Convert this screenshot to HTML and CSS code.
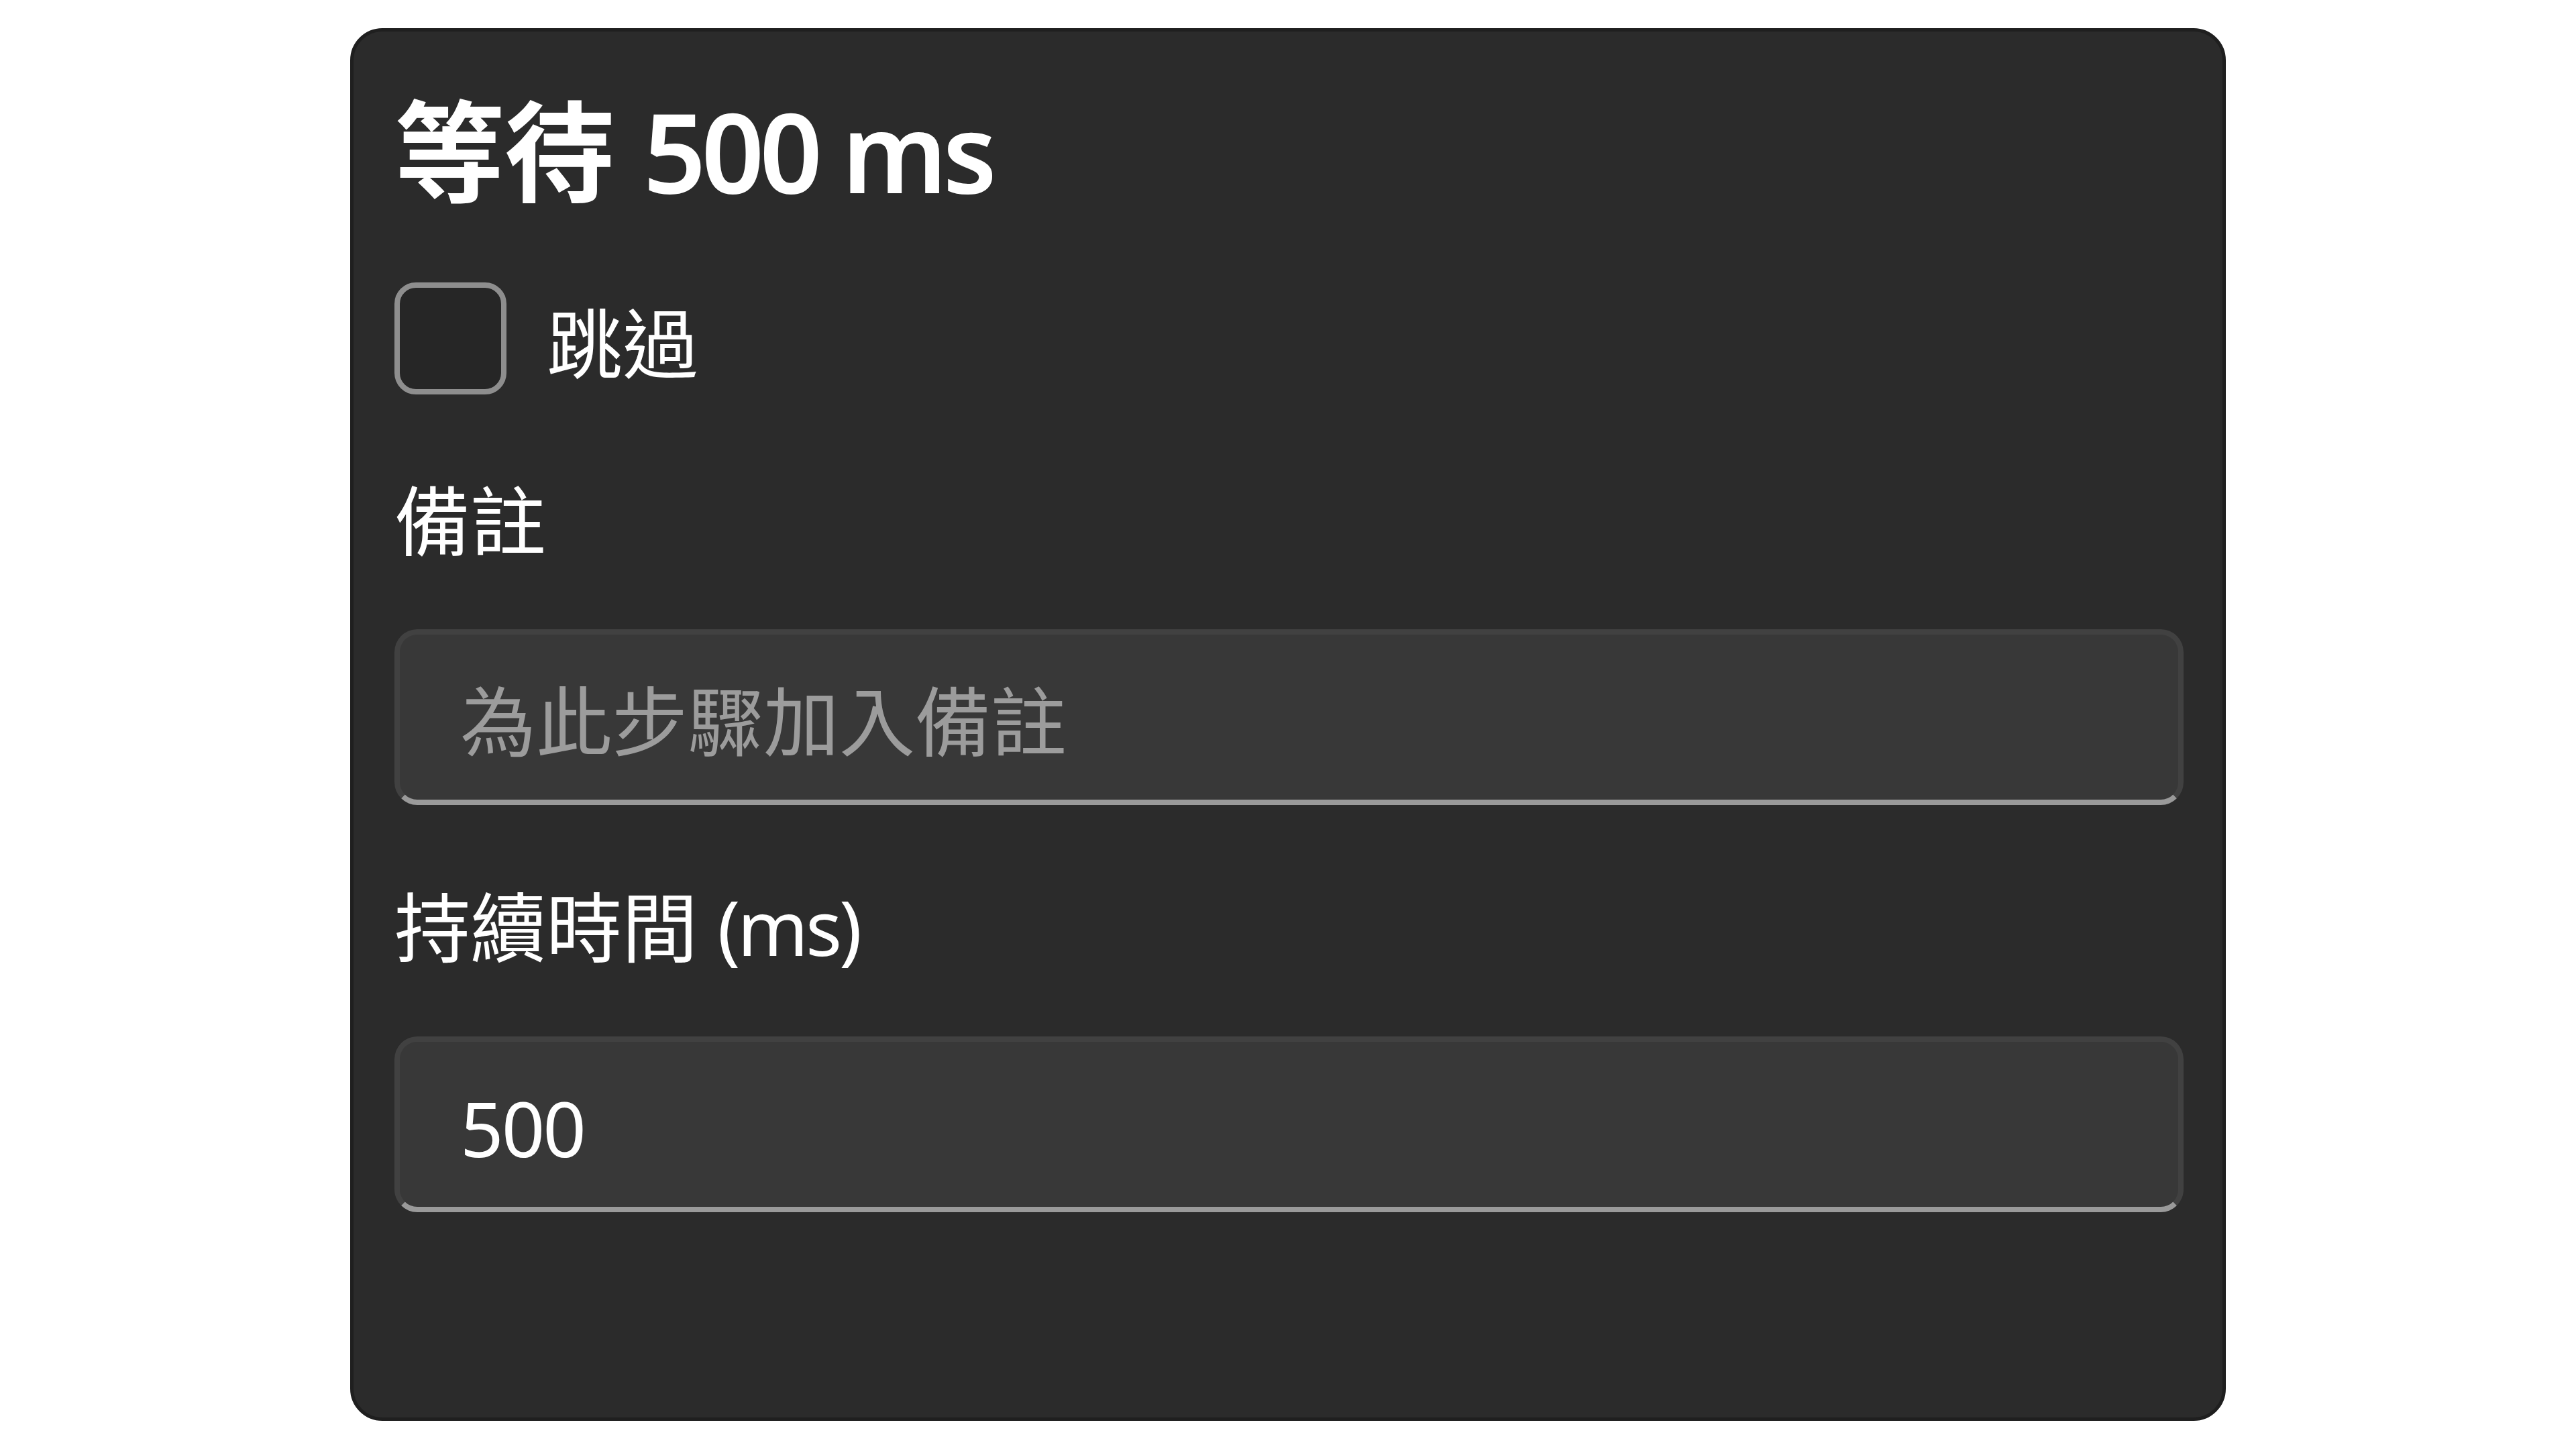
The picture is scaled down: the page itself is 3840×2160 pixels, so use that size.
FILE: index.html
```html
<!DOCTYPE html>
<html lang="zh-Hant">
<head>
<meta charset="utf-8">
<title>等待 500 ms</title>
<link rel="stylesheet" href="styles.css">
</head>
<body>
<div class="page">
  <section class="card">
    <h1 class="title">等待 <span class="latin">500 ms</span></h1>
    <label class="check-row">
      <span class="checkbox"></span>
      <span class="check-label">跳過</span>
    </label>
    <div class="field field-note">
      <div class="field-label">備註</div>
      <div class="textbox"><span class="placeholder">為此步驟加入備註</span></div>
    </div>
    <div class="field field-duration">
      <div class="field-label">持續時間 <span class="latin">(ms)</span></div>
      <div class="textbox"><span class="value latin">500</span></div>
    </div>
  </section>
</div>
</body>
</html>
```

FILE: styles.css
```css
html, body {
  margin: 0;
  padding: 0;
  background: #ffffff;
}

body {
  font-family: "Noto Sans", "Noto Sans CJK TC", sans-serif;
  color: #ffffff;
}

.page {
  padding: 42px 0 0 522px;
}

.card {
  box-sizing: border-box;
  width: 2796px;
  height: 2076px;
  background: #2b2b2b;
  border: 5px solid #1f1f1f;
  border-radius: 48px;
  padding: 66px 58px 0 61px;
  display: flex;
  flex-direction: column;
}

.title {
  margin: 0;
  font-size: 164px;
  line-height: 224px;
  font-weight: 700;
}

.title .latin {
  font-weight: 600;
  letter-spacing: -7px;
}

.check-row {
  margin-top: 84px;
  display: flex;
  align-items: center;
  gap: 60px;
  height: 167px;
}

.checkbox {
  box-sizing: border-box;
  width: 167px;
  height: 167px;
  border: 8px solid #8e8e8e;
  border-radius: 32px;
  background: #262626;
  flex: none;
}

.check-label {
  font-size: 113px;
  line-height: 160px;
  padding-top: 12px;
}

.field {
  display: flex;
  flex-direction: column;
}

.field-note {
  margin-top: 107px;
}

.field-duration {
  margin-top: 101px;
}

.field-label {
  font-size: 113px;
  line-height: 160px;
  margin-bottom: 83px;
}

.field-label .latin {
  letter-spacing: -4px;
}

.field-duration .field-label {
  margin-bottom: 84px;
}

.textbox {
  box-sizing: border-box;
  height: 262px;
  background: #383838;
  border: 8px solid #414141;
  border-bottom-color: #9a9a9a;
  border-radius: 34px;
  padding: 10px 0 0 90px;
  display: flex;
  align-items: center;
  font-size: 113px;
  line-height: 160px;
}

.placeholder {
  color: #9c9c9c;
}

.value {
  color: #ffffff;
  letter-spacing: -3px;
}
```
